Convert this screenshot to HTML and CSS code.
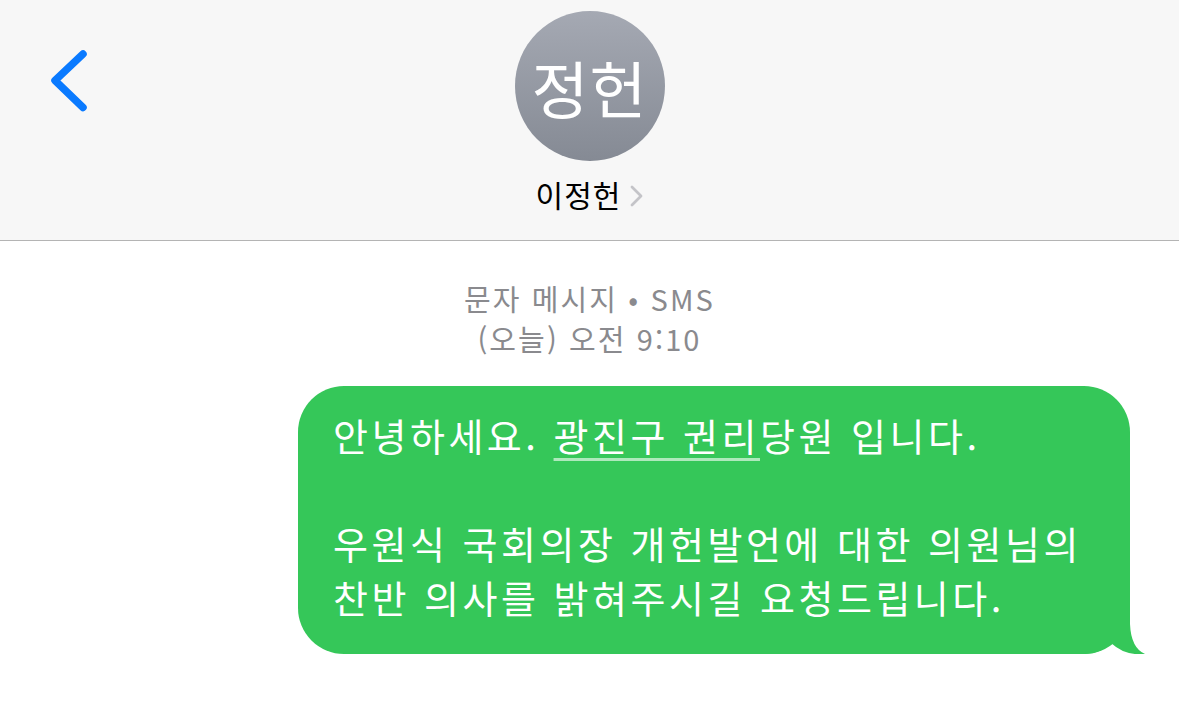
FILE: index.html
```html
<!DOCTYPE html>
<html lang="ko">
<head>
	<meta charset="UTF-8">
	<meta name="viewport" content="width=device-width, initial-scale=1">
	<title>이정헌 - 메시지</title>
	<link rel="stylesheet" href="styles.css">
</head>
<body>
	<header class="nav-bar">
		<a class="back-btn" href="#" aria-label="뒤로">
			<svg width="44" height="66" viewBox="0 0 44 66">
				<path d="M35 6 L7 32.5 L35 59.5" fill="none" stroke="#0a7aff" stroke-width="7.5" stroke-linecap="round" stroke-linejoin="round"/>
			</svg>
		</a>
		<div class="contact">
			<div class="avatar">정헌</div>
			<div class="contact-name">
				이정헌
				<svg class="name-chevron" width="16" height="24" viewBox="0 0 16 24">
					<path d="M3 3 L12 12 L3 21" fill="none" stroke="#c4c4c8" stroke-width="2.8" stroke-linecap="round" stroke-linejoin="round"/>
				</svg>
			</div>
		</div>
	</header>

	<main class="thread">
		<div class="meta">
			<div>문자 메시지 • SMS</div>
			<div>(오늘) 오전 9:10</div>
		</div>

		<div class="bubble-row">
			<div class="bubble">
				<p>안녕하세요. <span class="link">광진구 권리</span>당원 입니다.</p>
				<p>우원식 국회의장 개헌발언에 대한 의원님의<br>찬반 의사를 밝혀주시길 요청드립니다.</p>
				<svg class="tail" width="60" height="50" viewBox="0 0 60 50">
					<path d="M45 0 L45 20 Q46 44 60 50 Q40 52 26 39 Q15 50 0 50 L0 0 Z" fill="#35c759"/>
				</svg>
			</div>
		</div>
	</main>
</body>
</html>
```

FILE: styles.css
```css
:root {
	--ios-blue: #0a7aff;
	--bubble-green: #35c759;
	--meta-gray: #8a8a8e;
	--bar-bg: #f7f7f7;
	--bar-border: #b4b4b4;
}

body {
	margin: 0;
	padding: 0;
	background: #fff;
	font-family: "Noto Sans CJK KR", "Noto Sans", sans-serif;
	color: #000;
}

.nav-bar {
	position: relative;
	height: 241px;
	background: var(--bar-bg);
	border-bottom: 1px solid var(--bar-border);
	box-sizing: border-box;
	display: flex;
	justify-content: center;
}

.back-btn {
	position: absolute;
	left: 48px;
	top: 48px;
	display: block;
}

.contact {
	display: flex;
	flex-direction: column;
	align-items: center;
	padding-top: 11px;
}

.avatar {
	width: 150px;
	height: 150px;
	border-radius: 50%;
	background: linear-gradient(#a5a9b3, #858a94);
	color: #fff;
	font-size: 62px;
	font-weight: 400;
	display: flex;
	align-items: center;
	justify-content: center;
	letter-spacing: 1px;
	padding-top: 2px;
	box-sizing: border-box;
}

.contact-name {
	margin-top: 13px;
	font-size: 30px;
	line-height: 40px;
	letter-spacing: 1px;
	display: flex;
	align-items: center;
	gap: 8px;
	padding-left: 2px;
}

.name-chevron {
	margin-top: 4px;
}

.thread {
	padding-top: 37px;
}

.meta {
	text-align: center;
	color: var(--meta-gray);
	font-size: 29px;
	line-height: 40px;
	font-weight: 400;
	letter-spacing: 2.1px;
}

.bubble-row {
	display: flex;
	justify-content: flex-end;
	padding: 28px 49px 0 0;
}

.bubble {
	position: relative;
	width: 832px;
	box-sizing: border-box;
	background: var(--bubble-green);
	border-radius: 46px;
	color: #fff;
	padding: 22px 10px 30px 35px;
	font-size: 38px;
	line-height: 54px;
	letter-spacing: 3.5px;
}

.bubble p {
	margin: 0 0 54px;
}

.bubble p:last-of-type {
	margin-bottom: 0;
}

.link {
	text-decoration: underline;
	text-decoration-color: rgba(255, 255, 255, 0.6);
	text-decoration-thickness: 3px;
	text-underline-offset: 7px;
}

.tail {
	position: absolute;
	right: -15px;
	bottom: 0;
}
```
